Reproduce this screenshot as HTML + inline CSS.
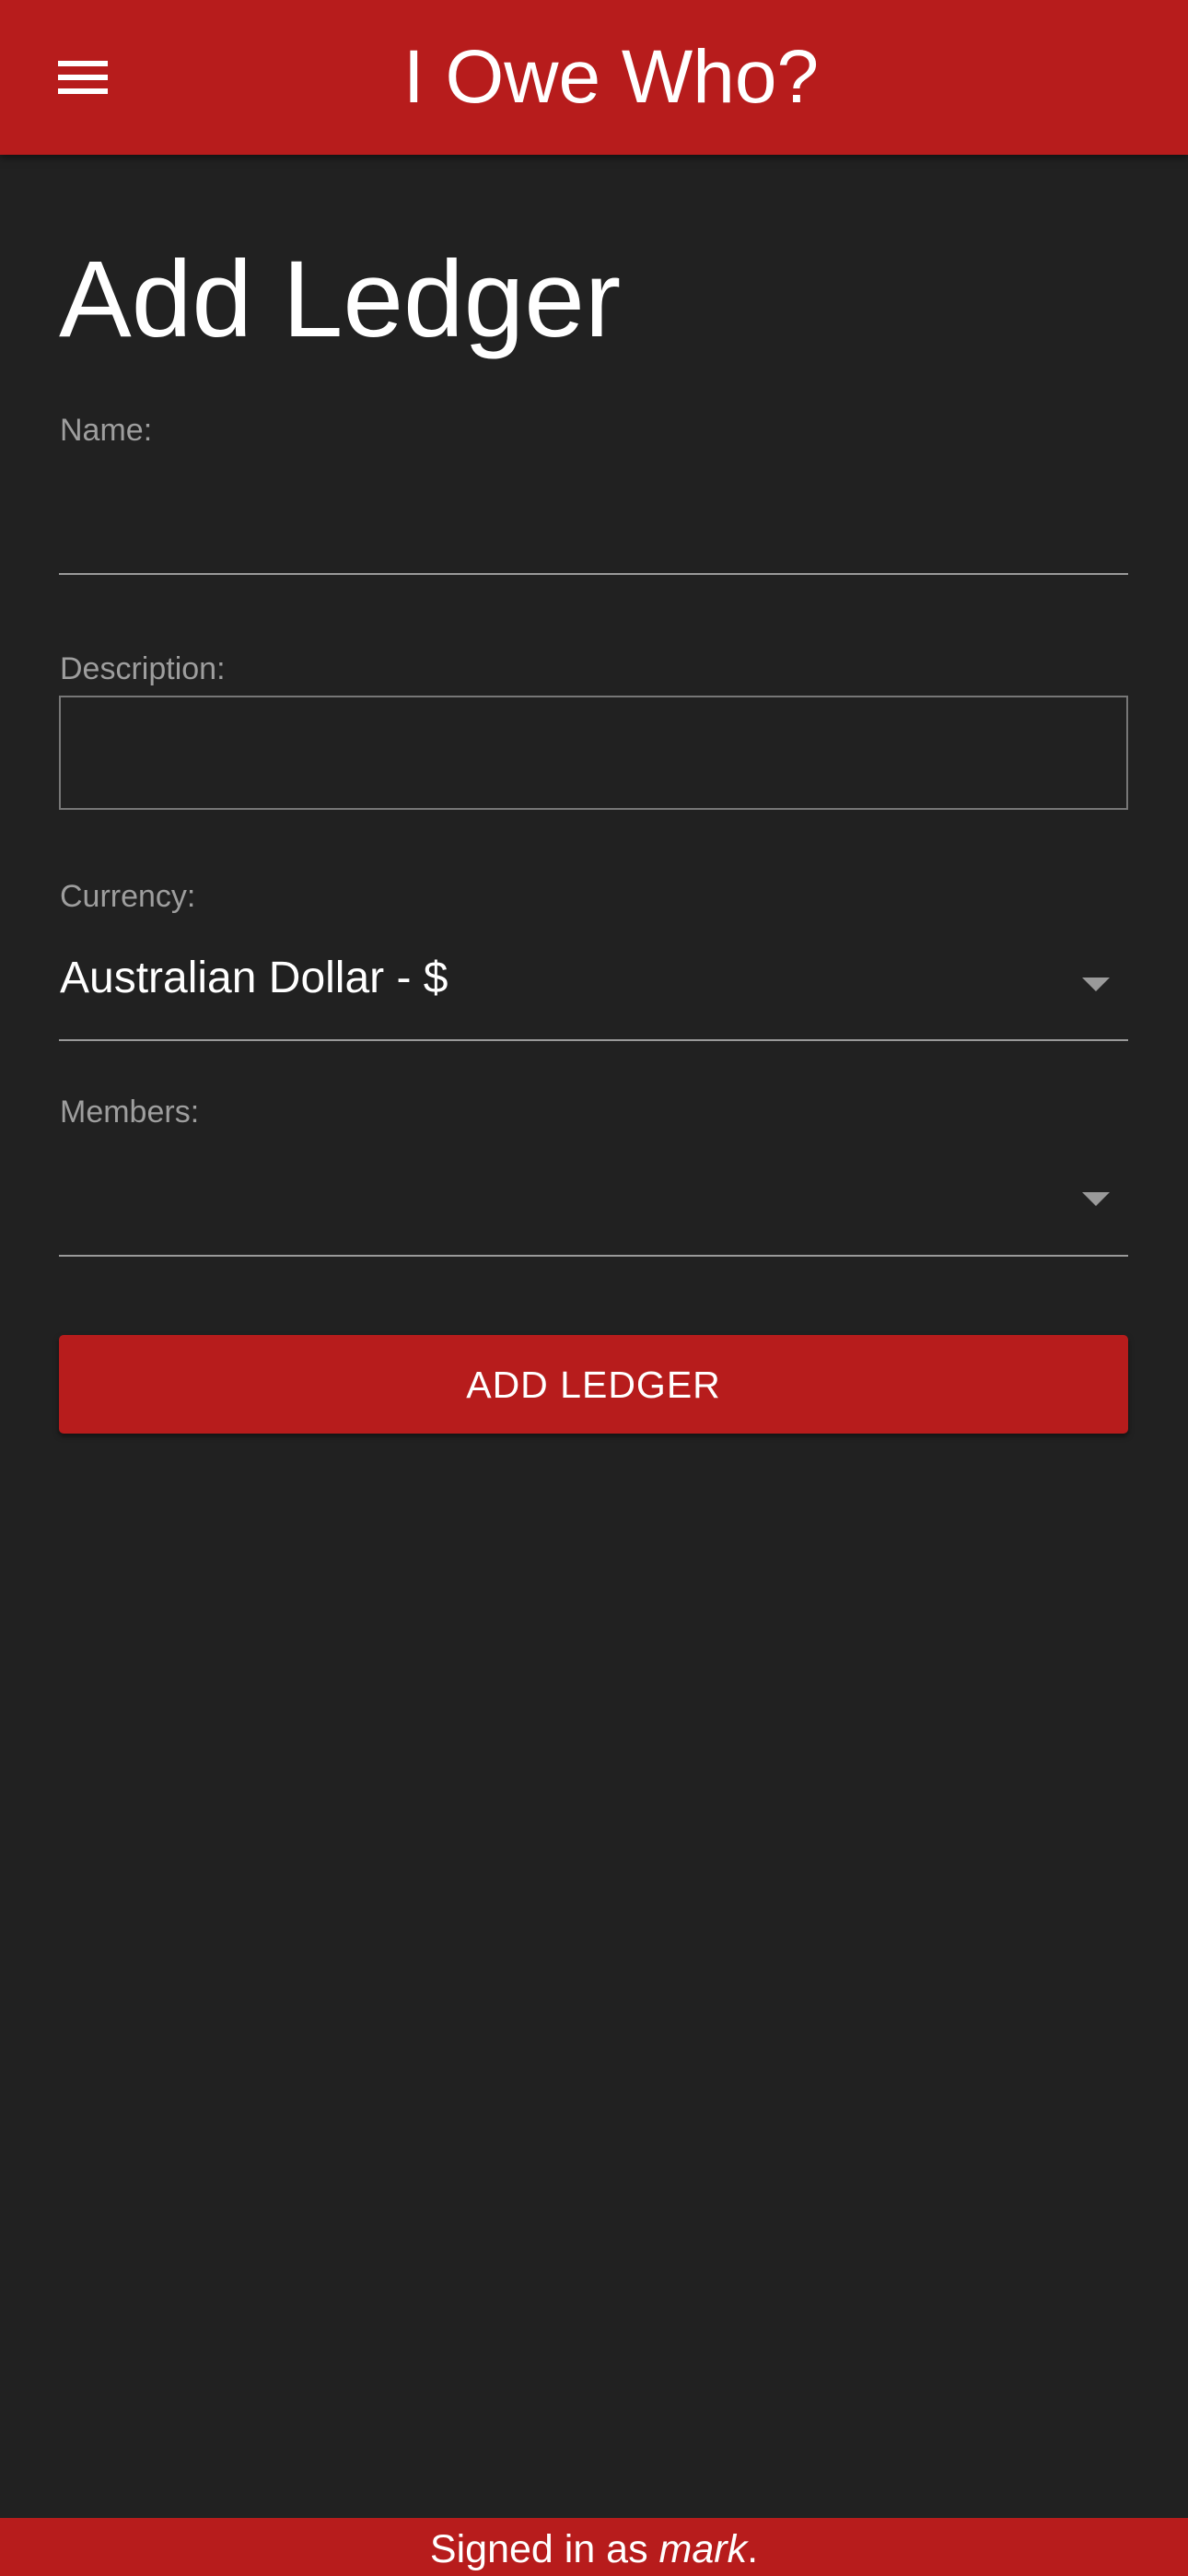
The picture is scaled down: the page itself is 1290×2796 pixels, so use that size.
<!DOCTYPE html>
<html><head><meta charset="utf-8"><style>
*{margin:0;padding:0;box-sizing:border-box}
body{width:1290px;height:2796px;background:#212121;font-family:"Liberation Sans",sans-serif;position:relative;overflow:hidden;color:#fff}
.hdr{position:absolute;left:0;top:0;width:1290px;height:168px;background:#b71c1c;box-shadow:0 3px 8px rgba(0,0,0,.5)}
.bar{position:absolute;left:63px;width:54px;height:6px;background:#fff}
.t{position:absolute;white-space:nowrap;line-height:1}
.lbl{color:#9e9e9e;font-size:34px}
.line{position:absolute;left:64px;width:1161px;height:2px;background:#9a9a9a}
.arr{position:absolute;left:1175px;width:0;height:0;border-left:15px solid transparent;border-right:15px solid transparent;border-top:15px solid #9a9a9a}
</style></head><body>
<div class="hdr">
<div class="bar" style="top:66px"></div><div class="bar" style="top:81px"></div><div class="bar" style="top:96px"></div>
<div class="t" style="left:436px;top:43px;font-size:82px;width:455px;text-align:center">I Owe Who?</div>
</div>
<div class="t" style="left:64px;top:266px;font-size:118px">Add Ledger</div>
<div class="t lbl" style="left:65px;top:450px">Name:</div>
<div class="line" style="top:622px"></div>
<div class="t lbl" style="left:65px;top:709px">Description:</div>
<div style="position:absolute;left:64px;top:755px;width:1161px;height:124px;border:2px solid #777"></div>
<div class="t lbl" style="left:65px;top:956px">Currency:</div>
<div class="t" style="left:65px;top:1038px;font-size:48px">Australian Dollar - $</div>
<div class="arr" style="top:1061px"></div>
<div class="line" style="top:1128px"></div>
<div class="t lbl" style="left:65px;top:1190px">Members:</div>
<div class="arr" style="top:1294px"></div>
<div class="line" style="top:1362px"></div>
<div style="position:absolute;left:64px;top:1449px;width:1161px;height:107px;background:#b71c1c;border-radius:5px;box-shadow:0 3px 6px rgba(0,0,0,.5)"></div>
<div class="t" style="left:64px;top:1483px;width:1161px;text-align:center;font-size:41px;letter-spacing:1px">ADD LEDGER</div>
<div style="position:absolute;left:0;top:2733px;width:1290px;height:63px;background:#b71c1c"></div>
<div class="t" style="left:0;top:2746px;width:1290px;text-align:center;font-size:43px">Signed in as <i>mark</i>.</div>
</body></html>
